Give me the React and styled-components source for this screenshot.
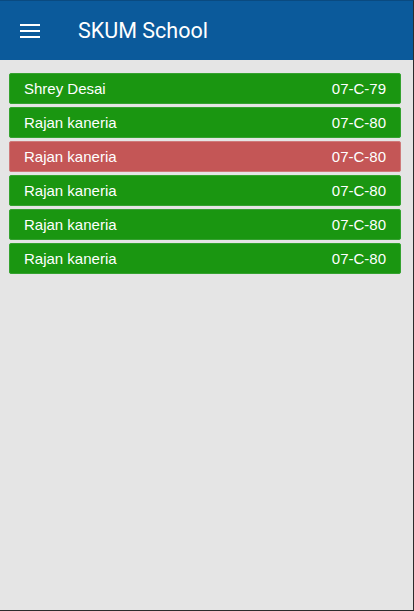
import React from 'react';
import styled, { createGlobalStyle } from 'styled-components';

const GlobalStyle = createGlobalStyle`
  html, body {
    margin: 0;
    padding: 0;
    background: #e5e5e5;
    font-family: Roboto, 'Liberation Sans', Arial, sans-serif;
  }
`;

const Screen = styled.div`
  width: 414px;
  height: 611px;
  box-sizing: border-box;
  background: #e5e5e5;
  border-right: 1px solid #2c2c2c;
  border-bottom: 1px solid #2c2c2c;
  border-top: 1px solid #0a4a80;
  display: flex;
  flex-direction: column;
`;

const Header = styled.header`
  height: 59px;
  background: #0b5a9b;
  display: flex;
  align-items: center;
  padding-left: 20px;
  color: #fff;
`;

const MenuButton = styled.div`
  width: 20px;
  height: 20px;
  display: flex;
  align-items: center;
  margin-right: 38px;
`;

const Title = styled.h1`
  margin: 0;
  font-size: 21.5px;
  font-weight: 400;
`;

const List = styled.div`
  display: flex;
  flex-direction: column;
  gap: 3px;
  padding: 13px 12px 0 9px;
`;

const Row = styled.div`
  height: 31px;
  box-sizing: border-box;
  border-radius: 2px;
  border: 1px solid ${p => (p.$alert ? '#cf7a7a' : '#35a230')};
  background: ${p => (p.$alert ? '#c45656' : '#1a9611')};
  color: #fff;
  display: flex;
  align-items: center;
  justify-content: space-between;
  padding: 0 14px;
  font-family: 'Liberation Sans', Arial, sans-serif;
  font-size: 15px;
`;

const students = [
  { name: 'Shrey Desai', code: '07-C-79' },
  { name: 'Rajan kaneria', code: '07-C-80' },
  { name: 'Rajan kaneria', code: '07-C-80', alert: true },
  { name: 'Rajan kaneria', code: '07-C-80' },
  { name: 'Rajan kaneria', code: '07-C-80' },
  { name: 'Rajan kaneria', code: '07-C-80' },
];

const App = () => {
  return (
    <>
      <GlobalStyle />
      <Screen>
        <Header>
          <MenuButton>
            <svg width="20" height="16" viewBox="0 0 20 16">
              <rect x="0" y="1" width="20" height="2" fill="#fff" />
              <rect x="0" y="7" width="20" height="2" fill="#fff" />
              <rect x="0" y="13" width="20" height="2" fill="#fff" />
            </svg>
          </MenuButton>
          <Title>SKUM School</Title>
        </Header>
        <List>
          {students.map((s, i) => (
            <Row key={i} $alert={s.alert}>
              <span>{s.name}</span>
              <span>{s.code}</span>
            </Row>
          ))}
        </List>
      </Screen>
    </>
  );
};

export default App;
